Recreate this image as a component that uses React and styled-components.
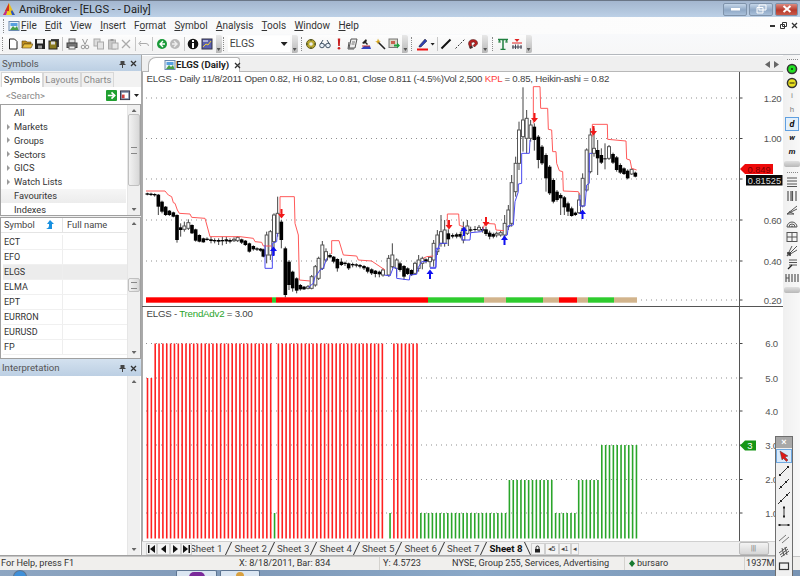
import React from "react";
import styled, { createGlobalStyle } from "styled-components";

const Global = createGlobalStyle`
  html, body { margin: 0; padding: 0; width: 800px; height: 576px; overflow: hidden; background: #f0f0f0; }
  * { box-sizing: border-box; }
  body { font-family: Roboto, "Open Sans", "Liberation Sans", sans-serif; color: #333; }
  svg { flex: none; }
`;

const Window = styled.div`
  position: relative; width: 800px; height: 576px; overflow: hidden;
  display: flex; flex-direction: column; font-size: 9.5px; line-height: 1;
`;
const TitleBar = styled.div`
  height: 17px; flex: none; display: flex; align-items: center; padding: 1px 2px 0 2px;
  border-top: 1px solid #6a7687;
  background: linear-gradient(#a3b6cf, #bcd0e6);
`;
const TitleText = styled.span`margin-left: 3px; font-size: 11.2px; color: #222;`;
const Caption = styled.div`margin-left: auto; display: flex; gap: 2px; height: 14px;`;
const CapBtn = styled.div`
  width: ${p => p.$close ? 23 : 24}px; height: 13px; border-radius: 2px; border: 1px solid #7f93ab;
  display: flex; align-items: center; justify-content: center;
  background: ${p => p.$close ? "linear-gradient(#dc8a80,#b83a2c 55%,#c85a4a)" : "linear-gradient(#c4d5e8,#8fa8c6 55%,#a9c0da)"};
`;
const MenuBar = styled.div`
  height: 17px; flex: none; display: flex; align-items: center; padding-left: 3px;
  background: linear-gradient(90deg, #f4f7fb, #fbfbfb 40%, #fdfdfd);
`;
const MenuItem = styled.span`font-size: 10px; color: #333; margin-right: 8.3px; white-space: nowrap;`;
const MdiCtl = styled.div`margin-left: auto; display: flex; gap: 4px; align-items: center; padding-right: 2px;`;
const ToolRow = styled.div`
  height: 21px; flex: none; display: flex; align-items: center; padding-left: 2px;
  background: linear-gradient(#f8f9fb, #f7f7f7);
  border-bottom: 1px solid #b4b8bd;
`;
const ToolGroup = styled.div`
  display: flex; align-items: center; height: 18px; margin-right: ${p => p.$gap ?? 6}px;
  background: linear-gradient(#fdfdfd, #f2f2f2);
`;
const Dots = styled.i`width: 2px; height: 14px; flex: none; margin: 0 2px 0 0; border-left: 1px dotted #8a8a8a;`;
const Btn = styled.span`
  width: ${p => p.$w ?? 13.7}px; height: 14px; flex: none; display: flex; align-items: center; justify-content: center;
`;
const Sep = styled.i`width: 1px; height: 14px; flex: none; background: #c6c6c6; margin: 0 1.5px;`;
const Grip = styled.i`
  width: 6px; height: 18px; flex: none; margin-left: 2px; position: relative;
  background: linear-gradient(#e8e8e8, #b8b8b8); border-radius: 0 2px 2px 0;
  &::after { content: ""; position: absolute; left: 1px; bottom: 2px; width: 4px; height: 3px; background: #555; clip-path: polygon(0 0,100% 0,50% 100%); }
`;
const Combo = styled.div`
  width: 62px; height: 16px; margin-left: 1px; display: flex; align-items: center; justify-content: space-between;
  background: #fff; padding: 0 2px 0 2px; font-size: 10.5px; color: #444;
`;
const Caret = styled.i`width: 7px; height: 4px; flex: none; background: #222; clip-path: polygon(0 0,100% 0,50% 100%);`;
const SmallCaret = styled(Caret)`width: 5px; height: 3px; margin-left: ${p => p.$ml ?? 0}px;`;

const Body = styled.div`flex: 1; min-height: 0; display: flex; background: #f0f0f0;`;
const Left = styled.aside`width: 142px; flex: none; display: flex; flex-direction: column; border-right: 1px solid #a8a8a8;`;
const DockTitle = styled.div`
  height: ${p => p.$h}px; flex: none; display: flex; align-items: center; padding: 1px 4px 0 2px;
  background: linear-gradient(#d3e1ef, #bccfe3); color: #555; font-size: 9.6px;
  & > span { flex: 1; }
`;
const DockCtl = styled.div`display: flex; gap: 4px; align-items: center;`;
const Tabs = styled.div`height: 16px; flex: none; display: flex; padding: 1px 0 0 1px; background: #f2f2f2;`;
const DockTab = styled.div`
  height: 15px; width: ${p => p.$w}px; display: flex; align-items: center; justify-content: center;
  font-size: 9.5px; color: ${p => p.$on ? "#444" : "#8a8a8a"}; background: ${p => p.$on ? "#fff" : "#f0f0f0"};
  border: 1px solid #d8d8d8; border-bottom: 0;
`;
const SearchRow = styled.div`
  height: 17px; flex: none; display: flex; align-items: center; gap: 3px; padding: 0 2px 0 6px; background: #fff;
  & > span { flex: 1; color: #888; font-size: 9.5px; }
`;
const ListBox = styled.div`
  flex: none; height: ${p => p.$h}px; display: flex; background: #fff; border: 1px solid #a0a0a0; margin-bottom: ${p => p.$mb ?? 0}px;
  border-width: ${p => p.$noSide ? "0 0 1px 0" : "1px"};
`;
const ListInner = styled.div`flex: 1; min-width: 0; overflow: hidden;`;
const TreeRow = styled.div`
  height: 13.8px; display: flex; align-items: center; padding-left: 6px; font-size: 9.3px; color: #333;
  background: ${p => p.$on ? "linear-gradient(#f6f6f6,#ececec)" : "transparent"}; margin-right: 1px;
`;
const Arrowlet = styled.i`
  width: 7px; margin-right: 0; height: 7px; flex: none;
  ${p => p.$show ? "border-left: 3px solid #9a9a9a; border-top: 3px solid transparent; border-bottom: 3px solid transparent; width: 0; height: 6px; margin-right: 4px;" : ""}
`;
const VScroll = styled.div`
  width: 13px; flex: none; display: flex; flex-direction: column; align-items: center; background: #f0f0f0;
  border-left: 1px solid #e6e6e6; padding: 4px 0; margin-right: ${p => p.$mr ?? 0}px;
`;
const SUp = styled.i`width: 5px; height: 3px; flex: none; background: #666; clip-path: polygon(50% 0,100% 100%,0 100%);`;
const SDn = styled.i`width: 5px; height: 3px; flex: none; background: #666; clip-path: polygon(0 0,100% 0,50% 100%); margin-top: auto;`;
const Thumb = styled.i`
  width: 12px; height: ${p => p.$h}px; flex: none; margin-top: ${p => p.$t}px; border: 1px solid #c0c0c0; border-radius: 2px;
  background: linear-gradient(90deg,#f2f2f2,#d8d8d8); display: flex; align-items: center; justify-content: center;
  &::after { content: ""; width: 6px; height: 5px; border-top: 1px solid #888; border-bottom: 1px solid #888; }
`;
const HeaderRow = styled.div`
  height: 15px; display: flex; align-items: center; font-size: 9.3px; color: #444; background: #fff; border-bottom: 1px solid #e4e4e4;
`;
const ColA = styled.div`width: 62px; flex: none; height: 100%; display: flex; align-items: center; gap: 9px; padding-left: 3px; border-right: 1px solid #e4e4e4;`;
const ColB = styled.div`flex: 1; padding-left: 4px;`;
const SymGap = styled.div`height: 2px;`;
const TreeGap = styled.div`height: 1px;`;
const SymRow = styled.div`
  height: 15px; display: flex; align-items: center; font-size: 9px; color: #333; border-bottom: 1px solid #f0f0f0;
  background: ${p => p.$on ? "#ececec" : "#fff"}; margin-left: 2px;
  & > div:first-child { width: 60px; height: 100%; flex: none; display: flex; align-items: center; padding-left: 1px; border-right: 1px solid #eee; }
`;

const Main = styled.main`flex: 1; min-width: 0; display: flex; flex-direction: column; margin-right: 1px;`;
const TabStrip = styled.div`
  height: 17px; flex: none; display: flex; align-items: flex-end; padding-left: 6px; background: #efefef; border-bottom: 1px solid #b8b8b8;
  border-top: 1px solid #fff;
`;
const DocTab = styled.div`
  height: 15px; width: 92px; margin-bottom: -1px; background: #fff; border: 1px solid #b4b4b4; border-bottom: 0; border-radius: 8px 3px 0 0;
  display: flex; align-items: center; gap: 0; padding-left: 15px; font-size: 9.6px; font-weight: 700; color: #222; white-space: nowrap;
`;
const DocClose = styled.span`margin-left: 5px; display: flex;`;
const TabNav = styled.div`margin: 0 4px 3px auto; display: flex; gap: 4px;`;
const Tri = styled.i`
  width: 5px; height: 7px; background: #666; clip-path: ${p => p.$l ? "polygon(100% 0,100% 100%,0 50%)" : "polygon(0 0,100% 50%,0 100%)"};
`;
const Pane = styled.div`position: relative; height: 234px; flex: none; background: #fff; overflow: hidden; border-left: 1px solid #aaa;
  & svg { display: block; }
`;
const PaneRule = styled.div`height: 1px; flex: none; background: #555;`;
const Legend = styled.div`
  position: absolute; left: 3.500px; top: 1px; font: 9.7px/11px "Liberation Sans", sans-serif; letter-spacing: -0.22px; color: #444; white-space: nowrap;
  & b { font-weight: 400; color: ${p => p.$c}; }
`;
const SheetBar = styled.div`
  height: 15px; flex: none; display: flex; align-items: center; background: #f0f0f0; border-top: 1px solid #d0d0d0; padding-left: 4px; overflow: hidden;
  border-bottom: 1px solid #a8a8a8;
`;
const NavBtn = styled.span`
  position: relative; z-index: 1;
  width: ${p => p.$w ?? 11}px; height: 12px; flex: none; display: flex; align-items: center; justify-content: center; border: 1px solid #d0d0d0; background: #f4f4f4;
  font: 7px "Liberation Sans", sans-serif; color: #444;
`;
const SheetTab = styled.div`
  width: ${p => p.$w ?? 42.5}px; margin-left: ${p => p.$ml ?? 0}px; flex: none; height: 13px; display: flex; align-items: center; font-size: 9.7px; color: ${p => p.$bold ? "#111" : "#444"};
  font-weight: ${p => p.$bold ? 700 : 400}; white-space: nowrap; position: relative;
  &::after { content: ""; position: absolute; right: ${p => p.$bold ? 3 : 5.5}px; top: 0; width: 1px; height: 13px; background: #333; transform: skewX(${p => p.$bold ? 25 : -25}deg); }
`;
const HScroll = styled.div`
  flex: 1; display: flex; align-items: center; height: 13px; padding-left: 160px;
`;
const HThumb = styled.i`
  width: 30px; height: 13px; flex: none; border: 1px solid #bbb; border-radius: 2px; background: linear-gradient(#f4f4f4,#d6d6d6);
  display: flex; align-items: center; justify-content: center; font-style: normal; font-size: 7px; color: #666;
`;
const RightBar = styled.aside`
  width: 16px; flex: none; display: flex; flex-direction: column; align-items: center; background: linear-gradient(90deg,#f0f0f0,#f8f8f8); padding-top: 3px;
`;
const RBtn = styled.span`
  width: 14px; height: ${p => p.$h ?? 13.8}px; flex: none; display: flex; align-items: center; justify-content: center; font-size: 8px; color: #888;
  ${p => p.$on ? "background:#e4f0fb; border:1px solid #5f9fe0;" : ""}
`;
const RGlyph = styled.b`color: #111; font-style: italic; font-size: ${p => p.$s ?? 8}px;`;
const RGrip = styled.i`width: 16px; height: 6px; flex: none; margin: 2px 0 4px; background: linear-gradient(#e0e0e0,#b8b8b8); border-radius: 2px;`;
const RDots = styled.i`width: 11px; height: 1px; flex: none; margin: 1px 0 2px; border-top: 1px dotted #888;`;

const Status = styled.footer`
  height: 14px; flex: none; display: flex; align-items: center; background: #f0efed; font-size: 9.15px; color: #333; border-top: 1px solid #c4c4c4;
`;
const Cell = styled.div`
  width: ${p => p.$w}px; flex: none; height: 100%; display: flex; align-items: center; gap: ${p => p.$g ?? 3}px; padding-left: ${p => p.$p ?? 3}px; white-space: nowrap;
  border-right: ${p => p.$b ? "1px solid #d4d2ce" : "0"};
`;
const Task = styled.div`
  height: 6px; flex: none; display: flex; align-items: flex-start; overflow: hidden;
  background: linear-gradient(90deg,#8ea6c2,#7f99b8 30%,#8aa8c8 60%,#7894b4);
`;
const TaskItem = styled.div`
  width: ${p => p.$w}px; margin-left: ${p => p.$m}px; height: 7px; flex: none; display: flex; justify-content: center; border: 1px solid #5d7592; border-bottom: 0;
  background: ${p => p.$orb ? "#3f8fd8" : "#dbe6f2"}; border-radius: ${p => p.$orb ? "7px 7px 0 0" : "2px 2px 0 0"};
`;
const Blob = styled.i`width: ${p => p.$w}px; height: 6px; border-radius: 5px 5px 0 0; background: ${p => p.$c}; margin-top: 1px;`;

const Palette = styled.div`
  position: absolute; left: 775px; top: 436px; width: 18px; height: 140px; background: #f0f0f0; border: 1px solid #6e6e6e; border-bottom: 0;
  display: flex; flex-direction: column; align-items: center;
`;
const PalTitle = styled.div`width: 100%; height: 11px; flex: none; background: #a8a8a8; color: #fff; display: flex; align-items: center; justify-content: center; font-size: 9px; font-weight: 700; font-family: "Liberation Sans", sans-serif;`;
const PalBtn = styled.span`
  width: 16px; height: ${p => p.$on ? 14 : 13.6}px; flex: none; display: flex; align-items: center; justify-content: center;
  ${p => p.$on ? "background:#d8e9fa; border:1px solid #6fa8e0; margin-bottom: 1px; margin-top: 1px;" : ""}
`;

const S = ({ children, s = 12 }) => <svg width={s} height={s} viewBox="0 0 12 12">{children}</svg>;
const ic = {
  logo: <svg width="14" height="15" viewBox="0 0 14 15"><path d="M7 1 1 13h12z" fill="#e8c020" /><path d="M7 1 3 9h4z" fill="#d03020" /><path d="M1 13l3-5 3 5z" fill="#c02890" /><path d="M7 13l3-5 3 5z" fill="#2a50c0" /><path d="M5 10h4l1 3H4z" fill="#f0d020" /></svg>,
  pic: <S><rect x="1" y="1.5" width="10" height="9" fill="#eaf3fb" stroke="#6a8ab0" /><rect x="2.5" y="3" width="7" height="3" fill="#58a0e0" /><path d="M2 10 5 6l2 2 2-2 1.5 4z" fill="#48a048" /></S>,
  doc: <S><path d="M2.5 1h5l2.5 2.500V11h-7.500z" fill="#fff" stroke="#222" /></S>,
  open: <S><path d="M1 3h4l1 1h4v2H3L1 10z" fill="#c09020" stroke="#5a4010" strokeWidth=".6" /><path d="M1 10l2-4h9l-2 4z" fill="#e8c040" stroke="#5a4010" strokeWidth=".6" /></S>,
  save: <S><rect x="1" y="1" width="10" height="10" fill="#222" /><rect x="3" y="1.500" width="6" height="4" fill="#eee" /><rect x="4" y="7.500" width="4" height="3" fill="#999" /></S>,
  saveall: <S><rect x="3" y="1" width="8" height="8" fill="#444" /><rect x="1" y="3" width="8" height="8" fill="#8a7a20" stroke="#222" /><rect x="3" y="3.500" width="4" height="3" fill="#ddd" /></S>,
  print: <S><rect x="3" y="1" width="6" height="4" fill="#ddd" stroke="#666" /><rect x="1" y="5" width="10" height="4.500" fill="#777" stroke="#444" /><rect x="3" y="8" width="6" height="3" fill="#eee" stroke="#666" /></S>,
  cut: <S><path d="M3.500 1 6 6.500M8.500 1 6 6.500" stroke="#999" fill="none" /><circle cx="4" cy="9" r="1.800" fill="none" stroke="#999" /><circle cx="8" cy="9" r="1.800" fill="none" stroke="#999" /></S>,
  copy: <S><rect x="1" y="1" width="6" height="7" fill="#ddd" stroke="#aaa" /><rect x="4.500" y="4" width="6" height="7" fill="#e4e4e4" stroke="#aaa" /></S>,
  paste: <S><rect x="1.500" y="2" width="7" height="9" fill="#c8c8c8" stroke="#aaa" /><rect x="5" y="5" width="6" height="6" fill="#e6e6e6" stroke="#aaa" /><rect x="3.500" y="1" width="3" height="2" fill="#999" /></S>,
  del: <S><path d="M2 2l8 8M10 2l-8 8" stroke="#aaa" strokeWidth="1.300" /></S>,
  undo: <S><path d="M3 3 1 5.500 3 8M1.500 5.500H8q2.500 0 2.500 2.500" fill="none" stroke="#aaa" /></S>,
  back: <S><circle cx="6" cy="6" r="5" fill="#1a9a3a" /><path d="M7 3 4 6l3 3M4.500 6H9" stroke="#fff" fill="none" strokeWidth="1.400" /></S>,
  fwd: <S><circle cx="6" cy="6" r="5" fill="#b8b8b8" /><path d="M5 3l3 3-3 3M3 6h4.500" stroke="#eee" fill="none" strokeWidth="1.400" /></S>,
  info: <S><circle cx="6" cy="6" r="5.300" fill="#111" /><rect x="5" y="2" width="2" height="2" fill="#fff" /><rect x="5" y="5" width="2" height="5" fill="#fff" /></S>,
  calc: <S><rect x="1" y="1" width="10" height="10" fill="#5a60b0" stroke="#334" /><path d="M2 9l3-3 2 1 3-4" stroke="#f0d030" fill="none" /><path d="M2 3h5" stroke="#fff" /></S>,
  flower: <S><circle cx="6" cy="6" r="4.500" fill="#b8a830" stroke="#6a6020" /><circle cx="6" cy="6" r="1.800" fill="#eee" /><path d="M6 1v2M6 9v2M1 6h2M9 6h2" stroke="#405030" /></S>,
  glass: <S><circle cx="3" cy="7.500" r="2.300" fill="#e8f0f8" stroke="#456" /><circle cx="9" cy="7.500" r="2.300" fill="#e8f0f8" stroke="#456" /><path d="M5 7h2M1.500 6 4 2M10.500 6 8 2" stroke="#456" fill="none" /></S>,
  bang: <S><path d="M4.800 0.500h2.400L6.800 8H5.200z" fill="#c82020" /><circle cx="6" cy="10.300" r="1.300" fill="#c82020" /></S>,
  docs: <S><path d="M4 1h6l-2 9H2z" fill="#eee" stroke="#555" /><path d="M2 4 1 11h6" fill="none" stroke="#555" /><path d="M5 4h3M4.500 6h3" stroke="#777" /></S>,
  hammer: <S><path d="M6 1 2 5l2 1 1-1 2 2 1-1-2-2 1-1z" fill="#222" /><path d="M1 11l3-3h6l1 3z" fill="#3040c0" /><path d="M2 8h8" stroke="#c03030" /></S>,
  wand: <S><path d="M4 4l7 7" stroke="#222" strokeWidth="1.600" /><path d="M4 0.500l.8 2 2 .8-2 .8L4 6.500l-.8-2-2-.8 2-.8z" fill="#d8a820" /></S>,
  run: <S><rect x="1" y="1" width="8.500" height="8.500" fill="#d8d8c8" stroke="#777" /><path d="M3 3h4v3H3z" fill="#c86050" /><path d="M6 6.500h3V4.500l3 3-3 3V8.500H6z" fill="#20a040" /></S>,
  pen: <svg width="13" height="14" viewBox="0 0 13 14"><path d="M3 9 9 2l2 2-6 6H3z" fill="#3040b0" stroke="#223" strokeWidth=".5" /><rect x="1" y="11.500" width="11" height="2" fill="#f01010" /></svg>,
  line: <S><path d="M1.500 10.500 10.500 1.500" stroke="#111" strokeWidth="2" /></S>,
  dline: <S><path d="M1.500 10.500 10.500 1.500" stroke="#333" strokeWidth="1" strokeDasharray="2 1.500" /></S>,
  magnet: <S><path d="M3 10.500 1.500 6Q1.500 1.500 6.500 1.500 11 2 10.500 6L7.500 9 6 7.500 8 5.500Q8 4 6.500 4 4 4 4.300 6L5.500 9.700z" fill="#b82020" stroke="#401010" strokeWidth=".5" /><path d="M3 10.500l2.500-.8-.5-1.700-2.500.6z" fill="#333" /></S>,
  tree: <S><path d="M1 1.500h10M2.500 1.500v3M6 1.500v10M9.500 1.500v3M3.500 11.500h5" stroke="#208040" strokeWidth="1.500" fill="none" /><path d="M1 4h3M8 4h3" stroke="#60a070" /></S>,
  barsr: <S><path d="M3.500 1h5L6 4z" fill="#e02020" /><path d="M1 5h10" stroke="#e02020" /><path d="M2 7v4M4.500 6.500v4.500M7 6.500v4.500M10 7v4M1 9h10" stroke="#445" fill="none" /></S>,
  green: <S><circle cx="6" cy="6" r="5.300" fill="#333" /><circle cx="6" cy="6" r="3.800" fill="#20e020" /><rect x="5" y="5" width="2" height="2" fill="#106010" /></S>,
  yellow: <S><circle cx="6" cy="6" r="5.300" fill="#333" /><circle cx="6" cy="6" r="3.800" fill="#e8e020" /><rect x="3.500" y="5.300" width="5" height="1.400" fill="#605810" /></S>,
  lines: <S><path d="M1 2h10M1 5h10M1 8h10M1 10.500h10" stroke="#555" /></S>,
  vbars: <S><path d="M2 1v10M5 1v10M6.500 1v10M10 1v10" stroke="#555" strokeWidth="1.200" /></S>,
  fan: <S><path d="M1 10 11 2M1 10 11 5M1 10 8 10M3 7.500l5 2.500" stroke="#555" fill="none" /></S>,
  arc: <S><path d="M1 10a5 5 0 0 1 10 0M3 10a3 3 0 0 1 6 0M5 10a1 1 0 0 1 2 0M1 10h10" stroke="#555" fill="none" /></S>,
  grid: <S><rect x="1" y="1.500" width="10" height="9" fill="none" stroke="#555" /><path d="M6 1.500v9M1 6h10" stroke="#555" /></S>,
  fan2: <S><path d="M1 11 11 1M1 11 11 5M1 11 6 1" stroke="#555" fill="none" /><path d="M1 8h3v3" stroke="#333" fill="none" strokeWidth="1.500" /></S>,
  pin2: <S><path d="M3 2h8M3 4.500h8M3 7h8" stroke="#555" /><path d="M6 7 2 11" stroke="#222" strokeWidth="1.200" /></S>,
  hbar: <svg width="14" height="10" viewBox="0 0 14 10"><path d="M1 1v8M4 1v8M1 5h3M7 1v8M10 1v8M13 1v8" stroke="#555" strokeWidth="1.200" fill="none" /></svg>,
  arrow: <S><path d="M2 1l8 5-3 1 3 3-1.500 1.500-3-3L4 10z" fill="#e01818" stroke="#333" strokeWidth=".4" /></S>,
  seg: <S><path d="M2 10 10 2" stroke="#333" /><rect x="1" y="9" width="2" height="2" fill="#222" /><rect x="9" y="1" width="2" height="2" fill="#222" /></S>,
  seg2: <S><path d="M1 11 11 1" stroke="#333" /><rect x="2" y="8" width="2" height="2" fill="#222" /><rect x="7" y="3" width="2" height="2" fill="#222" /></S>,
  seg3: <S><path d="M0 12 12 0" stroke="#333" /><rect x="2" y="8" width="2" height="2" fill="#222" /><rect x="8" y="2" width="2" height="2" fill="#222" /></S>,
  vert: <S><path d="M6 1v10" stroke="#333" /><rect x="5" y="0.500" width="2" height="2" fill="#222" /><rect x="5" y="9.500" width="2" height="2" fill="#222" /></S>,
  horz: <S><path d="M1 6h10" stroke="#333" /><rect x="0.500" y="5" width="2" height="2" fill="#222" /><rect x="9.500" y="5" width="2" height="2" fill="#222" /></S>,
  par: <S><path d="M1 8 8 2M4 10l7-6" stroke="#777" /></S>,
  par2: <S><path d="M1 7 9 1M2 9l8-6M3 11l8-6M4 2l2 8M7 1l2 8" stroke="#555" /></S>,
  rect: <S><rect x="1.500" y="3" width="9" height="6.500" fill="none" stroke="#333" strokeWidth="1.200" /></S>,
  goarrow: <S s={11}><rect width="12" height="12" rx="1" fill="#20a030" /><path d="M2 6h6M6 2.500 9.500 6 6 9.500" stroke="#fff" strokeWidth="1.800" fill="none" /></S>,
  layout: <S s={11}><rect x=".5" y="1" width="10" height="9.500" fill="#7a8aa8" stroke="#334" /><rect x="2" y="3" width="7" height="6" fill="#fff" /><rect x="2" y="5" width="3" height="4" fill="#d04040" /></S>,
  pinI: <svg width="7" height="8" viewBox="0 0 7 8"><path d="M1.500 1h4v3h1v1h-6V4h1zM3 5h1v3H3z" fill="#444" /></svg>,
  closeI: <svg width="7" height="7" viewBox="0 0 7 7"><path d="M1 1l5 5M6 1 1 6" stroke="#333" strokeWidth="1.300" /></svg>,
  sort: <svg width="10" height="10" viewBox="0 0 10 10"><path d="M6 0 10 4H8v5Q5 9 2 9q3-1 3-3V4H3z" fill="#1890e0" /></svg>,
  diamond: <svg width="6" height="7" viewBox="0 0 7 8"><path d="M3.500 0 7 4 3.500 8 0 4z" fill="#187a30" /></svg>,
  first: <svg width="7" height="8" viewBox="0 0 7 8"><path d="M0 0h1.500v8H0zM7 0v8L2 4z" fill="#111" /></svg>,
  prev: <svg width="5" height="8" viewBox="0 0 5 8"><path d="M5 0v8L0 4z" fill="#111" /></svg>,
  next: <svg width="5" height="8" viewBox="0 0 5 8"><path d="M0 0v8l5-4z" fill="#111" /></svg>,
  last: <svg width="7" height="8" viewBox="0 0 7 8"><path d="M7 0H5.500v8H7zM0 0v8l5-4z" fill="#111" /></svg>,
  lock: <svg width="7" height="8" viewBox="0 0 7 8"><path d="M2 4V2.500a1.500 1.500 0 0 1 3 0V4" fill="none" stroke="#222" /><rect x="1" y="4" width="5" height="3.500" fill="#222" /></svg>,
  winRestore: <svg width="11" height="10" viewBox="0 0 11 10"><path d="M3 1h7v5H3zM1 3.500h6v5.500H1z" fill="#a8bdd5" stroke="#fff" /></svg>,
  winClose: <svg width="10" height="8" viewBox="0 0 10 8"><path d="M1.500 1l7 6M8.500 1l-7 6" stroke="#fff" strokeWidth="2" /></svg>,
  winMin: <svg width="9" height="4"><rect y="1" width="9" height="2.500" fill="#fff" /></svg>,
  mdiMin: <svg width="6" height="3"><rect y="1" width="5" height="2" fill="#333" /></svg>,
  mdiRest: <svg width="7" height="7" viewBox="0 0 7 7"><path d="M2.500.5h4v4h-4zM.5 2.500h4v4h-4z" fill="#fff" stroke="#333" /></svg>,
};

const A = [[22,40,44,38,46,0],[33,41,45,38,48,0],[44,42,46,40,50,0],[55,44,80,42,105,0],[66,65,95,62,100,0],[77,80,105,78,108,0],[88,92,105,90,108,0],[100,97,110,95,112,0],[111,105,180,103,188,0],[122,142,150,130,170,0],[133,138,148,125,155,1],[145,128,145,118,150,1],[156,135,160,133,162,0],[167,148,182,146,185,0],[178,165,185,163,187,0],[190,175,187,173,188,0],[201,176,180,172,182,0],[213,178,183,170,190,0],[224,180,184,175,190,0],[236,180,185,175,195,0],[247,180,184,170,196,0],[259,178,184,170,192,0],[270,180,185,175,190,0],[282,178,182,172,186,1],[293,172,182,168,186,1],[305,178,188,176,192,0],[316,182,195,180,198,0],[328,190,215,188,218,0],[340,198,208,196,212,0],[351,205,209,202,213,0],[362,206,212,204,215,0],[370,208,230,206,232,0],[380,165,225,155,250,1],[391,155,225,150,240,1],[402,105,185,100,225,1],[413,100,160,50,170,1],[424,125,180,120,205,0],[436,205,345,200,352,0],[447,245,315,240,330,0],[458,275,325,272,335,0],[470,295,332,292,340,0],[481,315,328,312,332,0],[492,320,328,318,330,0],[504,320,325,315,328,1],[515,290,325,285,328,1],[526,260,315,255,320,1],[536,235,295,230,300,1],[547,195,265,183,270,1],[558,215,240,205,245,1],[570,225,232,220,235,0],[581,230,245,228,250,0],[592,237,265,235,275,0],[604,245,255,235,258,0],[615,248,252,245,258,0],[626,250,265,248,270,0],[638,252,256,248,262,0],[649,253,257,250,262,0],[660,255,260,252,265,0],[672,258,265,255,270,0],[683,262,275,260,280,0],[695,268,280,265,285,0],[706,272,282,270,292,0],[718,275,283,272,292,0],[729,270,285,265,290,1],[746,235,285,225,290,1],[757,225,260,190,265,1],[770,240,265,235,290,1],[780,250,270,245,275,0],[792,258,290,255,300,0],[803,265,282,262,285,0],[815,270,285,268,288,0],[825,250,280,245,285,1],[836,240,265,225,275,1],[847,235,250,230,268,1],[858,238,245,235,250,0],[870,232,245,228,262,1]];
const B = [[11,490,540,480,560,1],[22,465,515,450,525,1],[33,455,490,405,500,1],[44,450,490,420,500,1],[55,460,478,448,498,0],[68,465,470,460,475,0],[80,463,470,458,475,0],[91,462,470,455,475,0],[100,445,480,425,490,1],[112,438,460,420,465,1],[122,448,452,440,458,0],[135,447,450,438,455,0],[147,442,450,435,455,1],[158,447,452,440,458,0],[168,448,462,440,468,0],[179,458,470,452,478,0],[190,462,470,458,475,0],[200,460,465,455,472,1],[212,458,465,452,470,1],[224,430,465,405,480,1],[235,390,440,375,450,1],[245,308,430,285,440,1],[257,250,335,230,350,1],[267,150,250,125,270,1],[279,120,170,22,215,1],[290,115,175,90,220,1],[302,135,175,120,185,1],[313,140,180,130,212,0],[325,170,240,165,265,0],[336,200,250,195,255,0],[348,225,295,220,335,0],[359,260,340,255,345,0],[370,300,365,295,370,0],[381,335,360,330,365,0],[392,345,355,340,405,0],[403,352,382,348,405,0],[414,370,395,365,408,0],[425,385,408,380,410,0],[436,398,405,395,408,0],[447,360,398,340,402,1],[458,295,378,280,382,1],[470,210,330,205,335,1],[481,165,275,145,280,1],[492,205,220,145,230,1],[503,210,235,180,285,0],[514,225,248,205,252,0],[525,235,238,190,268,0],[537,200,235,195,240,1],[549,222,248,218,252,0],[560,232,270,228,275,0],[571,255,278,250,282,0],[582,265,282,262,285,0],[593,272,295,268,298,0],[605,268,282,265,285,1],[616,278,290,275,292,0]];

const toA = ([z, t, b, h, l, w]) => [140 + z / 3, 180 + t / 3, 180 + b / 3, 180 + h / 3, 180 + l / 3, w];
const toB = ([z, t, b, h, l, w]) => [430 + z / 3, 80 + t / 3, 80 + b / 3, 80 + h / 3, 80 + l / 3, w];
const candles = [...A.map(toA), ...B.map(toB)];

const ptsA = s => s.map(([x, y]) => `${140 + x / 3},${180 + y / 3}`).join(" ");
const ptsB = s => s.map(([x, y]) => `${430 + x / 3},${80 + y / 3}`).join(" ");
const red = [
  ptsA([[18,33],[75,33],[85,45],[95,50],[100,68],[105,70],[112,90],[118,100],[150,102],[155,112],[195,115],[210,170],[300,170],[340,175],[345,185],[365,187],[370,198],[395,198]]),
  ptsA([[420,100],[420,50],[463,50],[465,130],[475,165],[478,300],[510,303]]),
  ptsA([[575,222],[575,182],[597,182],[610,225],[650,228],[655,240],[695,243],[735,270]]),
  ptsA([[850,235],[860,230],[880,228]]),
  ptsB([[52,440],[52,402],[86,402],[88,436],[100,440]]),
  ptsB([[158,450],[165,430],[195,432],[198,450],[222,452]]),
  ptsB([[310,130],[310,20],[330,20],[332,85],[353,85],[355,148],[365,150],[368,215],[378,215],[380,250],[388,272],[398,275],[400,333],[445,335],[450,345]]),
  ptsB([[487,170],[487,133],[532,133],[533,178],[588,183],[590,237],[600,240],[605,265],[620,270]]),
];
const blue = [
  ptsA([[375,195],[375,265],[397,265],[397,190],[410,185],[412,160]]),
  ptsA([[505,322],[520,310],[525,290],[530,285],[540,270],[550,265],[560,235]]),
  ptsA([[733,285],[750,288],[760,262],[770,265],[770,295],[808,300],[810,285],[830,283],[835,262],[845,245],[860,245]]),
  ptsA([[870,262],[888,262],[888,205],[900,205]]),
  ptsB([[0,565],[17,565],[20,515],[30,490],[52,490]]),
  ptsB([[97,465],[97,480],[120,480],[122,458],[155,455],[160,445]]),
  ptsB([[220,470],[232,465],[235,437],[250,435],[255,365],[265,335],[265,312],[275,310],[275,220],[298,220],[300,180]]),
  ptsB([[450,345],[450,378],[465,378],[470,315],[478,310],[478,220],[487,220]]),
];
const downs = [[281.5,214],[534.5,118],[449,225],[486,222],[593.5,131]];
const ups = [[273.5,251],[430,274],[464,231],[504.500,240],[582.500,214]];
const band = [[146,272,"#ff0000"],[272,276,"#2ecc2e"],[276,428,"#ff0000"],[428,484,"#2ecc2e"],[484,506,"#d2b48c"],[506,543,"#2ecc2e"],[543,559,"#d2b48c"],[559,577,"#ff0000"],[577,588,"#d2b48c"],[588,614,"#2ecc2e"],[614,637,"#d2b48c"]];

const AX = 739.5;
const grid1 = [[98, "1.20"], [138.5, "1.00"], [179, ""], [220, "0.60"], [261, "0.40"], [300, "0.20"]];
const grid2 = [[343.5, "6.0"], [378, "5.0"], [411, "4.0"], [445, "3.0"], [479.5, "2.0"], [513, "1.0"]];

const Axis = ({ rows, top, h, right }) => (
  <>
    {rows.map(([y, label]) => (
      <g key={y}>
        <line x1="146" x2={AX} y1={y} y2={y} stroke="#8f8f8f" strokeDasharray="1 4" />
        <line x1={AX} x2={AX + 3} y1={y} y2={y} stroke="#444" />
        {label && <text x={right} y={y + 3.500} textAnchor="end" fontFamily="Liberation Sans, sans-serif" fontSize="9.600" letterSpacing="-0.2" fill="#555">{label}</text>}
      </g>
    ))}
    <line x1={AX} x2={AX} y1={top} y2={top + h} stroke="#555" />
  </>
);

const PriceChart = () => (
  <svg width="640" height="234" viewBox="143 72 640 234">
    <Axis rows={grid1} top={72} h={234} right={781.5} />
    {band.map(([a, b, c]) => <rect key={a} x={a} y="297.300" width={b - a} height="5.400" fill={c} />)}
    {candles.map(([x, t, b, h, l, w], i) => (
      <g key={i}>
        <line x1={x} x2={x} y1={h} y2={l} stroke="#444" />
        {w ? <rect x={x - 1.5} y={t} width="3" height={Math.max(b - t, 1)} fill="#fff" stroke="#555" />
           : <rect x={x - 1.8} y={t} width="3.600" height={Math.max(b - t, 1)} fill="#000" />}
      </g>
    ))}
    {red.map((p, i) => <polyline key={i} points={p} fill="none" stroke="#ff5a5a" />)}
    {blue.map((p, i) => <polyline key={i} points={p} fill="none" stroke="#4a4af0" />)}
    {downs.map(([x, y]) => <path key={x} d={`M${x - 1} ${y - 5}h2v5h2.500l-3.500 4.500-3.500-4.500h2.500z`} fill="#f01818" />)}
    {ups.map(([x, y]) => <path key={x} d={`M${x - 1} ${y + 5}h2v-5h2.500l-3.500-4.500-3.500 4.500h2.500z`} fill="#1010f0" />)}
    <path d="M740 169l5-5h28v10h-28z" fill="#ee0a0a" />
    <text x="770.500" y="172.500" textAnchor="end" fontFamily="Liberation Sans, sans-serif" fontSize="9.200" fill="#7a0000">0.849</text>
    <rect x="746" y="175" width="36.500" height="10.500" fill="#0a0a0a" />
    <text x="781" y="183.500" textAnchor="end" fontFamily="Liberation Sans, sans-serif" fontSize="9.200" fill="#ddd">0.81525</text>
  </svg>
);

const STEP = 3.85;
const barTop = i => {
  const x = 147.5 + i * STEP;
  if (i < 2) return ["#ff2020", 378, x];
  if (Math.abs(x - 274) < 1.5 || Math.abs(x - 389.5) < 1.95) return ["#2aa52a", 513, x];
  if (x < 417.5) return x > 385 && x < 392 ? [null] : ["#ff2020", 343.5, x];
  if (x < 508) return ["#2aa52a", 513, x];
  if (x < 553) return ["#2aa52a", 480, x];
  if (x < 556) return ["#2aa52a", 513, x];
  if (x < 559) return ["#2aa52a", 480, x];
  if (x < 578) return ["#2aa52a", 513, x];
  if (x < 601) return ["#2aa52a", 480, x];
  if (x < 638) return ["#2aa52a", 445, x];
  return [null];
};
const bars = Array.from({ length: 128 }, (_, i) => barTop(i)).filter(b => b[0]);

const IndicatorChart = () => (
  <svg width="640" height="234" viewBox="143 307 640 234">
    <Axis rows={grid2} top={307} h={234} right={778} />
    {bars.map(([c, y, x]) => <line key={x} x1={x} x2={x} y1={y} y2="538.500" stroke={c} strokeWidth="1.600" />)}
    <path d="M740 445.500l5-5h11v10h-11z" fill="#169616" />
    <text x="750" y="449" textAnchor="middle" fontFamily="Liberation Sans, sans-serif" fontSize="9.500" fill="#fff">3</text>
  </svg>
);

const menus = [["F", "ile", 0], ["E", "dit", 0], ["V", "iew", 0], ["I", "nsert", 0], ["o", "rmat", "F"], ["S", "ymbol", 0], ["A", "nalysis", 0], ["T", "ools", 0], ["W", "indow", 0], ["H", "elp", 0]];
const tree = [["All"], ["Markets", 1], ["Groups", 1], ["Sectors", 1], ["GICS", 1], ["Watch Lists", 1], ["Favourites", 0, 1], ["Indexes"]];
const syms = ["ECT", "EFO", "ELGS", "ELMA", "EPT", "EURRON", "EURUSD", "FP"];

export default function App() {
  return (
    <Window>
      <Global />
      <TitleBar>
        {ic.logo}
        <TitleText>AmiBroker - [ELGS -  - Daily]</TitleText>
        <Caption>
          <CapBtn>{ic.winMin}</CapBtn>
          <CapBtn>{ic.winRestore}</CapBtn>
          <CapBtn $close>{ic.winClose}</CapBtn>
        </Caption>
      </TitleBar>
      <MenuBar>
        <Dots />
        <Btn $w={14}>{ic.pic}</Btn>
        {menus.map(([k, r, pre]) => <MenuItem key={r}>{pre || ""}<u>{k}</u>{r}</MenuItem>)}
        <MdiCtl>{ic.mdiMin}{ic.mdiRest}{ic.closeI}</MdiCtl>
      </MenuBar>
      <ToolRow>
        <ToolGroup $gap={1}>
          <Dots />
          <Btn>{ic.doc}</Btn><Btn>{ic.open}</Btn><Btn>{ic.save}</Btn><Btn>{ic.saveall}</Btn>
          <Sep />
          <Btn>{ic.print}</Btn><Btn>{ic.cut}</Btn><Btn>{ic.copy}</Btn><Btn>{ic.paste}</Btn><Btn>{ic.del}</Btn>
          <Sep />
          <Btn>{ic.undo}</Btn>
          <Sep />
          <Btn>{ic.back}</Btn><Btn>{ic.fwd}</Btn>
          <Sep />
          <Btn>{ic.info}</Btn><Btn>{ic.calc}</Btn>
          <Grip />
        </ToolGroup>
        <ToolGroup $gap={3}>
          <Dots />
          <Combo>ELGS<Caret /></Combo>
          <Grip />
        </ToolGroup>
        <ToolGroup $gap={3}>
          <Dots />
          <Btn>{ic.flower}</Btn><Btn>{ic.glass}</Btn><Btn>{ic.bang}</Btn><Btn>{ic.docs}</Btn><Btn>{ic.hammer}</Btn><Btn>{ic.wand}</Btn><Btn>{ic.run}</Btn>
          <Grip />
        </ToolGroup>
        <ToolGroup $gap={4}>
          <Dots />
          <Btn>{ic.pen}</Btn><SmallCaret $ml={1} />
          <Sep />
          <Btn>{ic.line}</Btn><Btn>{ic.dline}</Btn><Btn>{ic.magnet}</Btn>
          <Grip />
        </ToolGroup>
        <ToolGroup>
          <Dots />
          <Btn>{ic.tree}</Btn><Btn>{ic.barsr}</Btn>
          <Grip />
        </ToolGroup>
      </ToolRow>
      <Body>
        <Left>
          <DockTitle $h={16}><span>Symbols</span><DockCtl>{ic.pinI}{ic.closeI}</DockCtl></DockTitle>
          <Tabs>
            <DockTab $w={42} $on>Symbols</DockTab>
            <DockTab $w={38}>Layouts</DockTab>
            <DockTab $w={33}>Charts</DockTab>
          </Tabs>
          <SearchRow>
            <span>&lt;Search&gt;</span>
            {ic.goarrow}
            {ic.layout}
            <SmallCaret />
          </SearchRow>
          <ListBox $h={112} $mb={1}>
            <ListInner>
              <TreeGap />
              {tree.map(([t, arrow, on]) => (
                <TreeRow key={t} $on={on}><Arrowlet $show={arrow} />{t}</TreeRow>
              ))}
            </ListInner>
            <VScroll><SUp /><Thumb $t={2} $h={72} /><SDn /></VScroll>
          </ListBox>
          <ListBox $h={142}>
            <ListInner>
              <HeaderRow><ColA>Symbol {ic.sort}</ColA><ColB>Full name</ColB></HeaderRow>
              <SymGap />
              {syms.map(s => <SymRow key={s} $on={s === "ELGS"}><div>{s}</div></SymRow>)}
            </ListInner>
            <VScroll><SUp /><Thumb $t={53} $h={14} /><SDn /></VScroll>
          </ListBox>
          <DockTitle $h={17}><span>Interpretation</span><DockCtl>{ic.pinI}{ic.closeI}</DockCtl></DockTitle>
          <ListBox $h={180} $noSide>
            <ListInner />
            <VScroll $mr={1}><SUp /><SDn /></VScroll>
          </ListBox>
        </Left>
        <Main>
          <TabStrip>
            <DocTab>{ic.pic}ELGS (Daily)<DocClose>{ic.closeI}</DocClose></DocTab>
            <TabNav><Tri $l /><Tri /></TabNav>
          </TabStrip>
          <Pane>
            <PriceChart />
            <Legend $c="#ff4040">ELGS - Daily 11/8/2011 Open 0.82, Hi 0.82, Lo 0.81, Close 0.811 (-4.5%)Vol 2,500 <b>KPL</b> = 0.85, Heikin-ashi = 0.82</Legend>
          </Pane>
          <PaneRule />
          <Pane>
            <IndicatorChart />
            <Legend $c="#2aa52a">ELGS - <b>TrendAdv2</b> = 3.00</Legend>
          </Pane>
          <SheetBar>
            <NavBtn>{ic.first}</NavBtn><NavBtn $w={13}>{ic.prev}</NavBtn><NavBtn>{ic.next}</NavBtn><NavBtn>{ic.last}</NavBtn>
            <SheetTab $ml={-2} $w={44.5}>Sheet 1</SheetTab>
            {[2, 3, 4, 5, 6, 7].map(n => <SheetTab key={n}>Sheet {n}</SheetTab>)}
            <SheetTab $bold $w={41}>Sheet 8</SheetTab>
            <NavBtn $w={14}>{ic.lock}</NavBtn><NavBtn $w={14}>◂5</NavBtn><NavBtn $w={12}>◂1</NavBtn><NavBtn $w={8}>◂</NavBtn>
            <HScroll><HThumb>|||</HThumb></HScroll>
          </SheetBar>
        </Main>
        <RightBar>
          <RDots />
          <RBtn>{ic.green}</RBtn>
          <RBtn>{ic.yellow}</RBtn>
          <RBtn>i</RBtn>
          <RBtn>h</RBtn>
          <RBtn $on $h={14}><RGlyph $s={9}>d</RGlyph></RBtn>
          <RBtn><RGlyph>w</RGlyph></RBtn>
          <RBtn><RGlyph>m</RGlyph></RBtn>
          <RGrip />
          <RDots />
          <RBtn $h={14}>{ic.lines}</RBtn>
          <RBtn $h={14}>{ic.vbars}</RBtn>
          <RBtn $h={13.5}>{ic.fan}</RBtn>
          <RBtn $h={13.5}>{ic.arc}</RBtn>
          <RBtn $h={14}>{ic.grid}</RBtn>
          <RBtn $h={13.5}>{ic.fan2}</RBtn>
          <RBtn $h={14}>{ic.pin2}</RBtn>
          <RBtn $h={14}>{ic.hbar}</RBtn>
          <RGrip />
        </RightBar>
      </Body>
      <Status>
        <Cell $w={239} $p={1}>For Help, press F1</Cell>
        <Cell $w={141} $p={0} $b>X: 8/18/2011, Bar: 834</Cell>
        <Cell $w={72} $p={3}>Y: 4.5723</Cell>
        <Cell $w={173} $p={0} $b>NYSE, Group 255, Services, Advertising</Cell>
        <Cell $w={80} $p={4} $g={2}>{ic.diamond}bursaro</Cell>
        <Cell $w={40} $b />
        <Cell $w={50} $p={1}>1937M</Cell>
      </Status>
      <Task>
        <TaskItem $orb $w={14} $m={13} />
        <TaskItem $w={41} $m={149}><Blob $w={16} $c="#7a2a9a" /></TaskItem>
        <TaskItem $w={40} $m={3}><Blob $w={8} $c="#d8a040" /></TaskItem>
      </Task>
      <Palette>
        <PalTitle>×</PalTitle>
        <PalBtn $on>{ic.arrow}</PalBtn>
        <PalBtn>{ic.seg}</PalBtn><PalBtn>{ic.seg2}</PalBtn><PalBtn>{ic.seg3}</PalBtn><PalBtn>{ic.vert}</PalBtn><PalBtn>{ic.horz}</PalBtn><PalBtn>{ic.par}</PalBtn><PalBtn>{ic.par2}</PalBtn><PalBtn>{ic.rect}</PalBtn>
      </Palette>
    </Window>
  );
}
